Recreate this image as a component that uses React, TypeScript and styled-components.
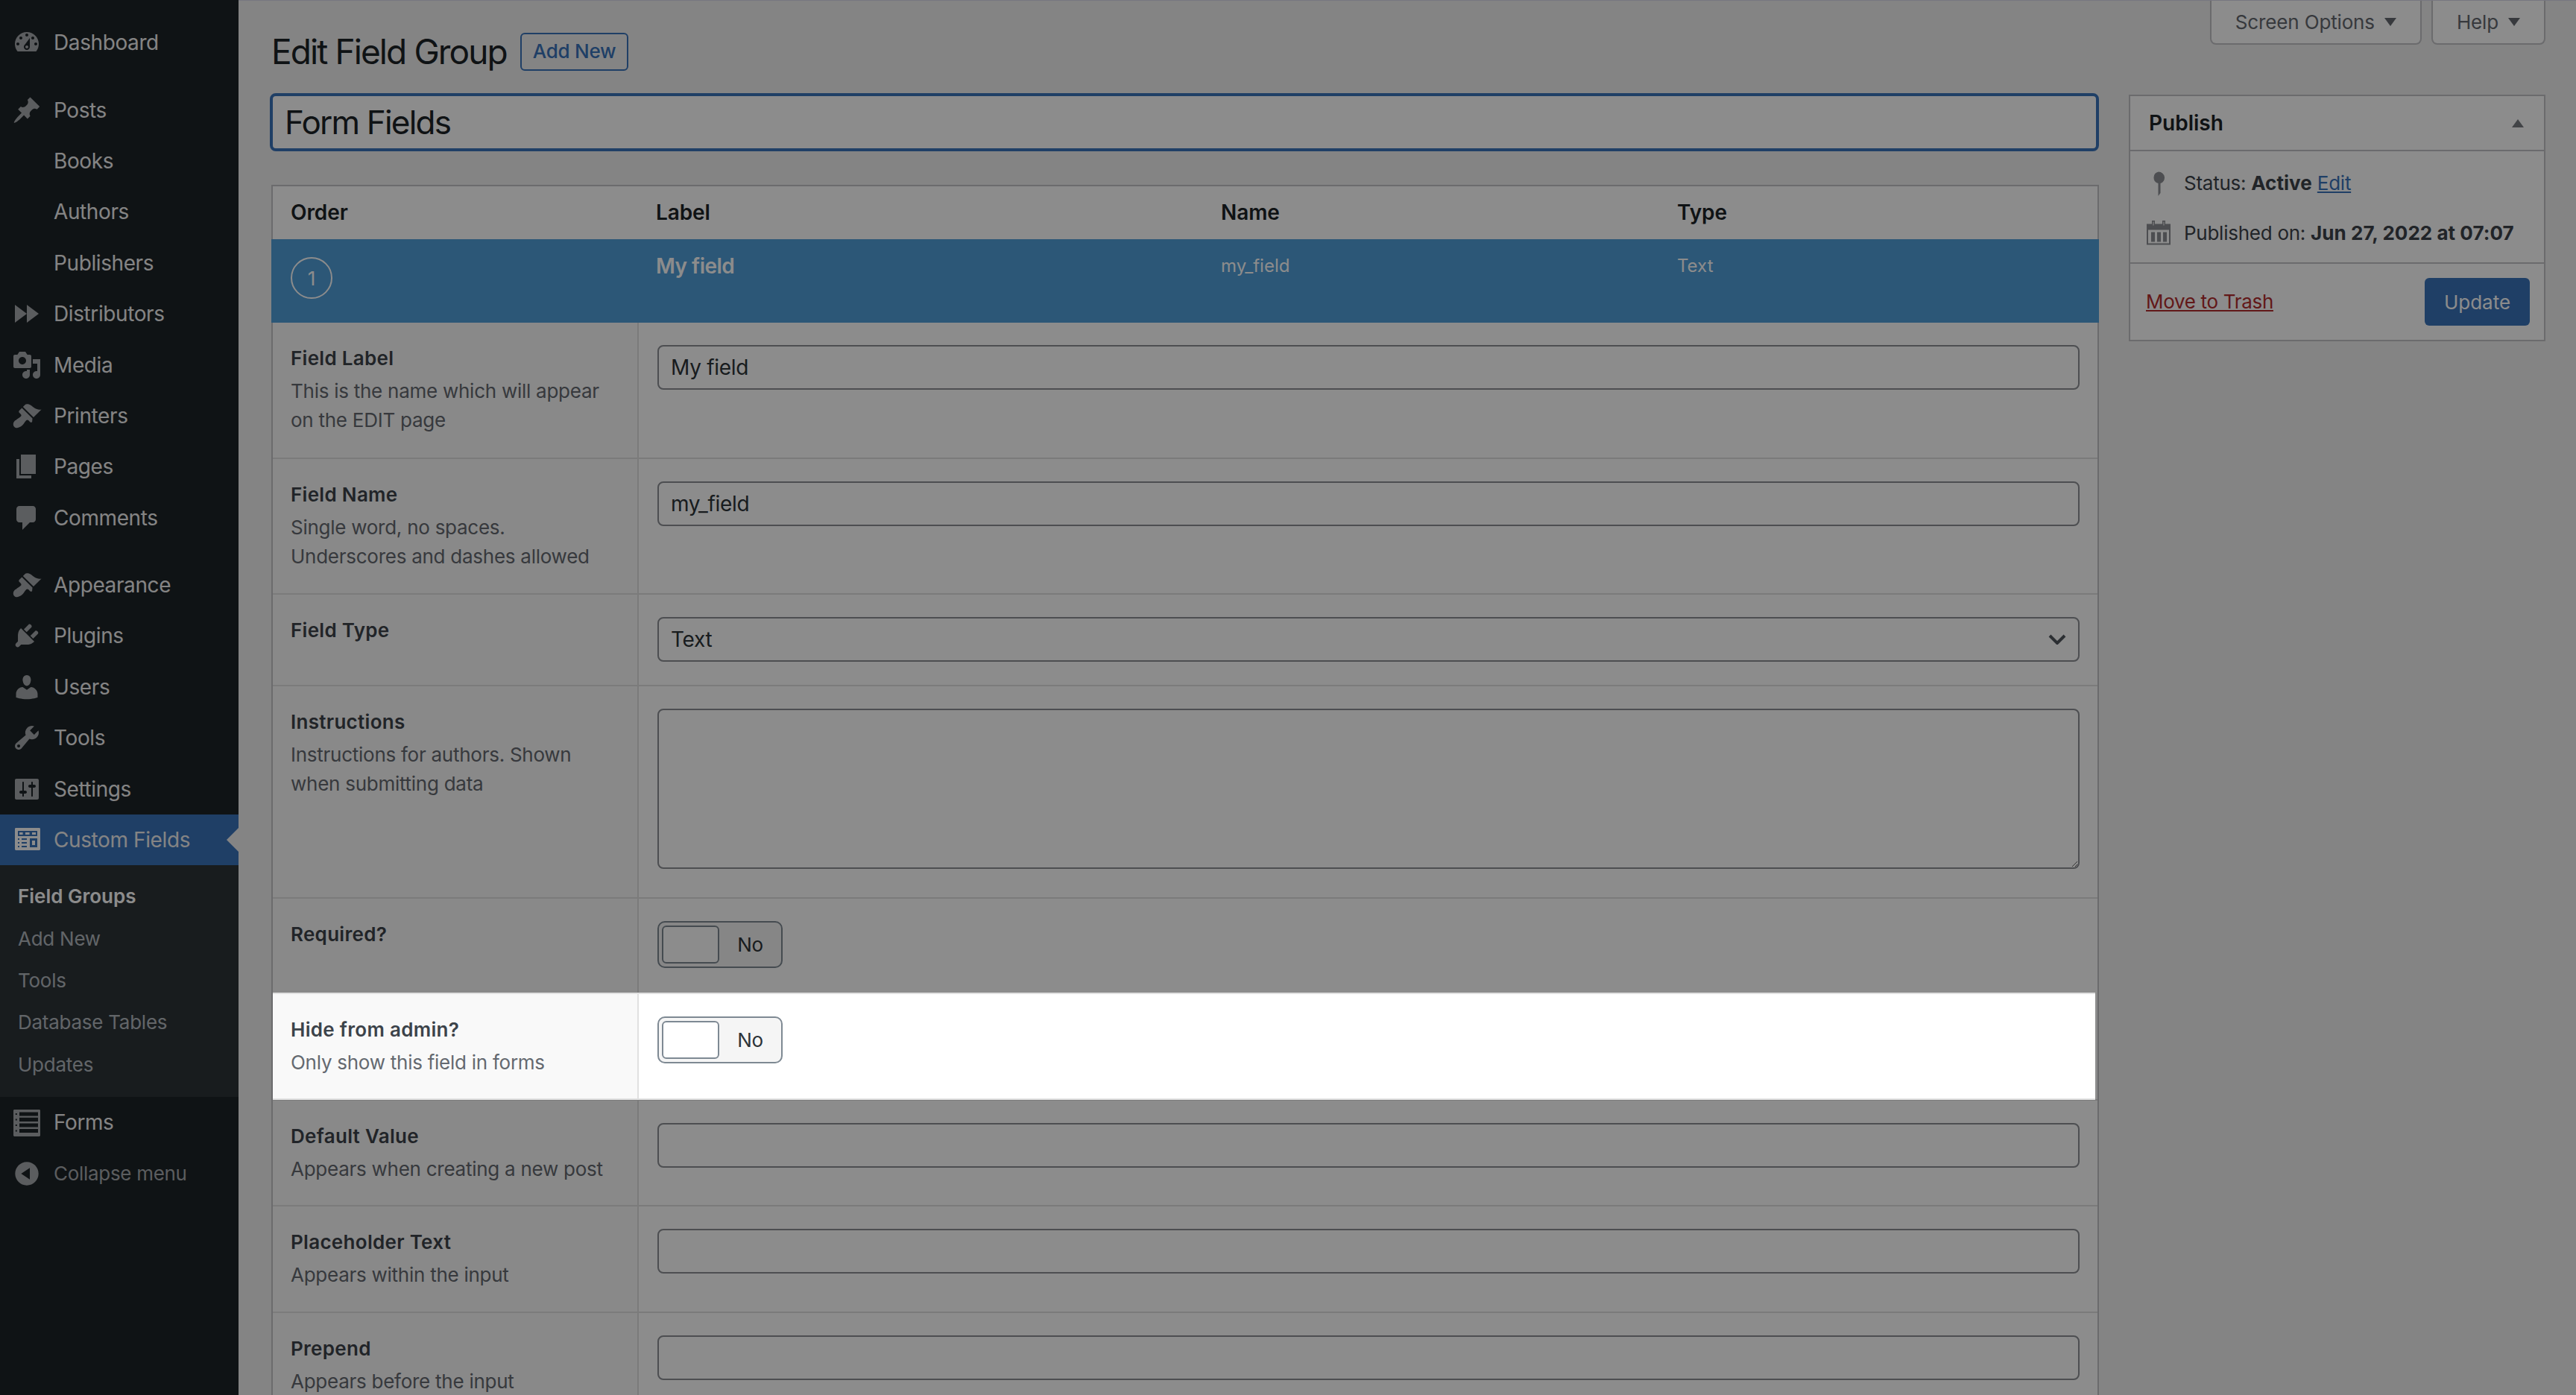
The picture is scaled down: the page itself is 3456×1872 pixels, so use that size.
import React from 'react';
import styled, { createGlobalStyle } from 'styled-components';

const GlobalStyle = createGlobalStyle`
    html, body {
        margin: 0;
        height: 100%;
        overflow: hidden;
        background: #f0f0f1;
    }
    * {
        box-sizing: border-box;
    }
    body {
        font-family: Inter, "Liberation Sans", sans-serif;
        font-size: 26px;
        line-height: 39px;
        letter-spacing: -0.26px;
        color: #3c434a;
    }
`;

const accent = '#3a73ba';

const Shell = styled.div`
    display: flex;
    height: 1872px;
    overflow: hidden;
`;

const Dimmer = styled.div`
    position: fixed;
    inset: 0;
    z-index: 10;
    background: rgba(0, 0, 0, 0.45);
`;

/* sidebar */
const Sidebar = styled.nav`
    flex: 0 0 320px;
    background: #1d2327;
    padding-top: 23px;
`;

const MenuItem = styled.a<{ $gap?: boolean; $indent?: boolean; $active?: boolean }>`
    position: relative;
    display: flex;
    align-items: center;
    gap: 16px;
    height: 68.4px;
    margin-top: ${(p) => (p.$gap ? '22px' : '0')};
    padding-left: ${(p) => (p.$indent ? '72px' : '16px')};
    font-size: 28px;
    line-height: 36px;
    letter-spacing: -0.4px;
    color: #f0f0f1;
    background: ${(p) => (p.$active ? accent : 'transparent')};
    svg {
        fill: ${(p) => (p.$active ? '#fff' : '#a7aaad')};
    }
`;

const ActiveArrow = styled.span`
    position: absolute;
    right: 0;
    top: 18px;
    border: 16px solid transparent;
    border-left: 0;
    border-right-color: #f0f0f1;
`;

const MenuIcon = styled.svg`
    flex: 0 0 40px;
    width: 40px;
    height: 40px;
`;

const SubMenu = styled.div`
    background: #2c3338;
    padding: 14px 0 15px;
`;

const SubItem = styled.a<{ $current?: boolean }>`
    display: block;
    padding: 10px 24px;
    font-size: 26px;
    line-height: 36.4px;
    font-weight: ${(p) => (p.$current ? 600 : 400)};
    letter-spacing: ${(p) => (p.$current ? '0' : '-0.26px')};
    color: ${(p) => (p.$current ? '#fff' : 'rgba(240, 246, 252, 0.7)')};
`;

const CollapseItem = styled(MenuItem)`
    font-size: 26px;
    letter-spacing: -0.3px;
    color: #a7aaad;
`;

/* main area */
const Main = styled.main`
    flex: 1;
    min-width: 0;
    border-top: 1px solid #d8d8ea;
    padding: 0 41px 0 42px;
`;

const Header = styled.header`
    display: flex;
    justify-content: space-between;
    align-items: flex-start;
    height: 124px;
`;

const TitleGroup = styled.div`
    display: flex;
    align-items: center;
    gap: 18px;
    margin: 42px 0 0 2px;
`;

const PageTitle = styled.h1`
    margin: 0;
    font-size: 46px;
    line-height: 52px;
    font-weight: 400;
    letter-spacing: -1.9px;
    color: #1d2327;
`;

const AddNew = styled.a`
    height: 51px;
    padding: 0 15px;
    border: 2px solid ${accent};
    border-radius: 6px;
    font-size: 26px;
    line-height: 46px;
    font-weight: 500;
    color: ${accent};
`;

const Tabs = styled.div`
    display: flex;
    gap: 13px;
`;

const Tab = styled.button`
    display: flex;
    align-items: center;
    gap: 13px;
    height: 59px;
    padding: 0 32px;
    background: #fff;
    border: 2px solid #c3c4c7;
    border-top: 0;
    border-radius: 0 0 8px 8px;
    font: inherit;
    letter-spacing: -0.15px;
    color: #646970;
`;

const Caret = styled.span`
    border: 8px solid transparent;
    border-bottom: 0;
    border-top: 11px solid #646970;
`;

const Columns = styled.div`
    display: grid;
    grid-template-columns: 1fr 559px;
    gap: 40px;
    align-items: start;
`;

const TitleInput = styled.input`
    display: block;
    width: 100%;
    height: 78px;
    margin-bottom: 45px;
    padding: 0 16px;
    border: 4px solid ${accent};
    border-radius: 8px;
    background: #fff;
    outline: 0;
    font-family: inherit;
    font-size: 44px;
    letter-spacing: -1.8px;
    color: #1d2327;
`;

const Table = styled.section`
    margin-left: 2px;
    background: #fff;
    border: solid #c3c4c7;
    border-width: 2px 2px 0;
`;

const HeadRow = styled.div`
    display: grid;
    grid-template-columns: 490px 758px 612px 1fr;
    height: 71px;
    align-items: center;
    font-size: 28px;
    font-weight: 600;
    letter-spacing: -0.1px;
    color: #1d2327;
`;

const HeadCell = styled.span`
    padding-left: 24px;
`;

const ActiveRow = styled.div`
    display: grid;
    grid-template-columns: 490px 758px 612px 1fr;
    height: 112px;
    margin: 0 -2px;
    padding: 0 2px;
    background: #509ed9;
    color: #fff;
`;

const ActiveCell = styled.div<{ $strong?: boolean }>`
    padding: 17px 0 0 24px;
    font-size: ${(p) => (p.$strong ? '28px' : '24px')};
    line-height: 38px;
    font-weight: ${(p) => (p.$strong ? 600 : 400)};
    letter-spacing: ${(p) => (p.$strong ? '-0.5px' : '0')};
`;

const OrderCell = styled.div`
    padding: 24px 0 0 24px;
`;

const OrderBadge = styled.span`
    display: flex;
    align-items: center;
    justify-content: center;
    width: 56px;
    height: 56px;
    border: 2px solid #fff;
    border-radius: 50%;
    font-size: 26px;
`;

const LabelCol = styled.div`
    padding: 28px 24px 29.5px;
    background: #f9f9f9;
    border-right: 2px solid #e1e1e1;
`;

const FieldRow = styled.div<{ $lit?: boolean }>`
    position: ${(p) => (p.$lit ? 'relative' : 'static')};
    z-index: ${(p) => (p.$lit ? 11 : 'auto')};
    display: grid;
    grid-template-columns: 491px 1fr;
    margin-right: ${(p) => (p.$lit ? '3px' : '0')};
    margin-bottom: ${(p) => (p.$lit ? '-1.5px' : '0')};
    background: #fff;
    border-top: 2px solid #e1e1e1;
    border-bottom: ${(p) => (p.$lit ? '2px solid #e1e1e1' : '0')};
    &:nth-child(3) {
        border-top: 0;
    }
    &:nth-child(3) ${LabelCol} {
        padding-bottom: 31px;
    }
`;

const FieldName = styled.div`
    font-weight: 600;
    letter-spacing: 0.3px;
    color: #3c434a;
`;

const FieldHint = styled.div`
    margin-top: 5px;
    color: #646970;
`;

const InputCol = styled.div<{ $lit?: boolean }>`
    padding: 30px ${(p) => (p.$lit ? '21px' : '24px')} 31px 25px;
`;

const TextBox = styled.input`
    display: block;
    width: 100%;
    height: 60px;
    padding: 0 16px;
    border: 2px solid #8c8f94;
    border-radius: 8px;
    background: #fff;
    font-family: inherit;
    font-size: 28px;
    letter-spacing: -0.3px;
    color: #2c3338;
`;

const SelectBox = styled.select`
    display: block;
    width: 100%;
    height: 60px;
    padding: 0 16px;
    border: 2px solid #8c8f94;
    border-radius: 8px;
    appearance: none;
    background: #fff url("data:image/svg+xml,%3Csvg xmlns='http://www.w3.org/2000/svg' width='24' height='14' viewBox='0 0 24 14'%3E%3Cpath d='M2 2l10 10L22 2' fill='none' stroke='%2350575e' stroke-width='4'/%3E%3C/svg%3E") no-repeat right 16px center;
    font-family: inherit;
    font-size: 28px;
    letter-spacing: -0.3px;
    color: #2c3338;
`;

const AreaBox = styled.textarea`
    display: block;
    width: 100%;
    height: 215px;
    margin-bottom: 7px;
    border: 2px solid #8c8f94;
    border-radius: 8px;
    background: #fff;
`;

const Toggle = styled.div`
    display: flex;
    align-items: center;
    width: 168px;
    height: 63px;
    margin-bottom: 2px;
    padding-left: 4px;
    border: 2px solid #7e8993;
    border-radius: 10px;
    background: #f5f5f5;
`;

const ToggleKnob = styled.span`
    flex: 0 0 77px;
    height: 51px;
    border: 2px solid #7e8993;
    border-radius: 6px;
    background: #fff;
`;

const ToggleText = styled.span`
    flex: 1;
    text-align: center;
    color: #2c3338;
`;

/* publish box */
const Publish = styled.aside`
    margin-top: 2px;
    background: #fff;
    border: 2px solid #c3c4c7;
`;

const PublishHead = styled.div`
    display: flex;
    align-items: center;
    justify-content: space-between;
    height: 74px;
    padding: 0 27px 0 25px;
    border-bottom: 2px solid #c3c4c7;
    font-size: 28px;
    font-weight: 600;
    letter-spacing: 0;
    color: #1d2327;
`;

const CollapseCaret = styled.span`
    border: 8px solid transparent;
    border-top: 0;
    border-bottom: 11px solid #787c82;
`;

const PublishBody = styled.div`
    display: flex;
    flex-direction: column;
    gap: 28px;
    padding: 23px 0 20px 22px;
`;

const MetaLine = styled.div`
    display: flex;
    align-items: center;
    gap: 18px;
    svg {
        flex: 0 0 32px;
        fill: #8c8f94;
    }
`;

const Strong = styled.b`
    font-weight: 700;
    letter-spacing: 0.04px;
`;

const BlueLink = styled.a`
    color: ${accent};
    text-decoration: underline;
`;

const PublishFoot = styled.div`
    display: flex;
    align-items: center;
    justify-content: space-between;
    padding: 19px 19px 19px 21px;
    border-top: 2px solid #c3c4c7;
`;

const TrashLink = styled.a`
    margin-bottom: 2px;
    letter-spacing: -0.32px;
    color: #b32d2e;
    text-decoration: underline;
`;

const UpdateButton = styled.button`
    width: 141px;
    height: 64px;
    border: 0;
    border-radius: 6px;
    background: ${accent};
    font: inherit;
    color: #fff;
`;

const dashicons: Record<string, string> = {
    dashboard:
        'M3.76 16h12.48c1.1-1.37 1.76-3.11 1.76-5 0-4.42-3.58-8-8-8s-8 3.58-8 8c0 1.89.66 3.63 1.76 5zM10 4c.55 0 1 .45 1 1s-.45 1-1 1-1-.45-1-1 .45-1 1-1zM6 6c.55 0 1 .45 1 1s-.45 1-1 1-1-.45-1-1 .45-1 1-1zm8 0c.55 0 1 .45 1 1s-.45 1-1 1-1-.45-1-1 .45-1 1-1zm-5.37 5.55L12 7v6c0 1.1-.9 2-2 2s-2-.9-2-2c0-.57.24-1.08.63-1.45zM4 10c.55 0 1 .45 1 1s-.45 1-1 1-1-.45-1-1 .45-1 1-1zm12 0c.55 0 1 .45 1 1s-.45 1-1 1-1-.45-1-1 .45-1 1-1zm-5 3c0-.55-.45-1-1-1s-1 .45-1 1 .45 1 1 1 1-.45 1-1z',
    post: 'M10.44 3.02l1.82-1.82 6.36 6.35-1.83 1.82c-1.05-.68-2.48-.57-3.41.36l-.75.75c-.92.93-1.04 2.35-.35 3.41l-1.83 1.82-2.41-2.41-2.8 2.79c-.42.42-3.38 2.71-3.8 2.29s1.86-3.39 2.28-3.81l2.79-2.79L4.1 9.36l1.83-1.82c1.05.69 2.48.57 3.4-.36l.75-.75c.93-.92 1.05-2.35.36-3.41z',
    forward: 'M2 4l8 6V4l8 6-8 6v-6l-8 6z',
    media: 'M13 11V4c0-.55-.45-1-1-1h-1.67L9 1H5L3.67 3H2c-.55 0-1 .45-1 1v7c0 .55.45 1 1 1h10c.55 0 1-.45 1-1zM7 4.5c1.38 0 2.5 1.12 2.5 2.5S8.38 9.5 7 9.5 4.5 8.38 4.5 7 5.62 4.5 7 4.5zM14 6h5v10.5c0 1.38-1.12 2.5-2.5 2.5S14 17.88 14 16.5s1.12-2.5 2.5-2.5c.17 0 .34.02.5.05V9h-3V6zm-4 8.05V13h2v3.5c0 1.38-1.12 2.5-2.5 2.5S7 17.88 7 16.5 8.12 14 9.5 14c.17 0 .34.02.5.05z',
    brush: 'M14.48 11.06L7.41 3.99l1.5-1.5c.5-.56 2.3-.47 3.51.32 1.21.8 1.43 1.28 2.91 2.1 1.18.64 2.45 1.26 4.45.85zm-.71.71L6.7 4.7 4.93 6.47c-.39.39-.39 1.02 0 1.41l1.06 1.06c.39.39.39 1.03 0 1.42-.6.6-1.43 1.11-2.21 1.69-.35.26-.7.53-1.01.84C1.43 13.23.91 14.9.91 15.79c0 .39.14 1.03.53 1.42l.39.39c.38.39.9.53 1.39.53.89 0 2.56-.52 3.9-1.85.31-.31.58-.66.84-1.01.58-.78 1.09-1.61 1.69-2.21.39-.39 1.03-.39 1.42 0l1.06 1.06c.39.39 1.02.39 1.41 0z',
    page: 'M6 15V2h10v13H6zm-1 1h8v2H3V5h2v11z',
    comments:
        'M5 2h9c1.1 0 2 .9 2 2v7c0 1.1-.9 2-2 2h-2l-5 5v-5H5c-1.1 0-2-.9-2-2V4c0-1.1.9-2 2-2z',
    plugins:
        'M13.11 4.36L9.87 7.6 8 5.73l3.24-3.24c.35-.34 1.05-.2 1.56.32.52.51.66 1.21.31 1.55zm-8 1.77l.91-1.12 9.01 9.01-1.19.84c-.71.71-2.63 1.16-3.82 1.16H6.14L4.9 17.26c-.59.59-1.54.59-2.12 0-.59-.58-.59-1.53 0-2.12l1.24-1.24v-3.88c0-1.13.4-3.19 1.09-3.89zm7.26 3.97l3.24-3.24c.34-.35 1.04-.21 1.55.31.52.51.66 1.21.31 1.55l-3.24 3.25z',
    users: 'M10 9.25c-2.27 0-2.73-3.44-2.73-3.44C7 4.02 7.82 2 9.97 2c2.16 0 2.98 2.02 2.71 3.81 0 0-.41 3.44-2.68 3.44zm0 2.57L12.72 10c2.39 0 4.52 2.33 4.52 4.53v2.49s-3.65 1.13-7.24 1.13c-3.65 0-7.24-1.13-7.24-1.13v-2.49c0-2.25 1.94-4.48 4.47-4.48z',
    tools: 'M16.68 9.77c-1.34 1.34-3.3 1.67-4.95.99l-5.41 6.52c-.99.99-2.59.99-3.58 0s-.99-2.59 0-3.57l6.52-5.42c-.68-1.65-.35-3.61.99-4.95 1.28-1.28 3.12-1.62 4.72-1.06l-2.89 2.89 2.82 2.82 2.86-2.87c.53 1.58.18 3.39-1.08 4.65zM3.81 16.21c.4.39 1.04.39 1.43 0 .4-.4.4-1.04 0-1.43-.39-.4-1.03-.4-1.43 0-.39.39-.39 1.03 0 1.43z',
    settings:
        'M18 16V4c0-.55-.45-1-1-1H3c-.55 0-1 .45-1 1v12c0 .55.45 1 1 1h14c.55 0 1-.45 1-1zM8 11h1c.55 0 1 .45 1 1s-.45 1-1 1H8v1.5c0 .28-.22.5-.5.5s-.5-.22-.5-.5V13H6c-.55 0-1-.45-1-1s.45-1 1-1h1V5.5c0-.28.22-.5.5-.5s.5.22.5.5V11zm5-2h-1c-.55 0-1-.45-1-1s.45-1 1-1h1V5.5c0-.28.22-.5.5-.5s.5.22.5.5V7h1c.55 0 1 .45 1 1s-.45 1-1 1h-1v5.5c0 .28-.22.5-.5.5s-.5-.22-.5-.5V9z',
    collapse:
        'M10 2.16c4.33 0 7.84 3.51 7.84 7.84s-3.51 7.84-7.84 7.84S2.16 14.33 2.16 10 5.71 2.16 10 2.16zm2 11.72V6.12L6.18 9.97z',
    fieldsTable:
        'M2.700 2h15.600c.4 0 .7.3.7.7v13.600c0 .4-.3.7-.7.7H2.700c-.4 0-.7-.3-.7-.7V2.700c0-.4.3-.7.7-.7zM4 4v3.500h13V4H4zm1 1h2.300v1.500H5V5zm4 0h2.800v1.500H9V5zm4.500 0H16v1.500h-2.500V5zM4 9v1h1V9H4zm2.500 0v1H10V9H6.500zM12 9v6h5V9h-5zm1.500 1.500h2v3h-2v-3zM4 11.500v1h1v-1H4zm2.500 0v1H10v-1H6.500zM4 14v1h1v-1H4zm2.500 0v1H10v-1H6.500z',
    forms: 'M1.700 1.500h16.600c.4 0 .7.3.7.700v16.600c0 .4-.3.7-.7.7H1.700c-.4 0-.7-.3-.7-.7V2.200c0-.4.3-.7.7-.7zM5 3.300v2.400h12.500V3.300H5zm0 3.600v2.600h12.500V6.900H5zm0 3.800v2.600h12.500v-2.600H5zm0 3.800V17h12.500v-2.500H5zM2.400 4v1h1V4h-1zm0 3.700v1h1v-1h-1zm0 3.800v1h1v-1h-1zm0 3.700v1h1v-1h-1z',
};

const Icon = ({ name }: { name: string }) => (
    <MenuIcon viewBox="0 0 20 20">
        <path fillRule="evenodd" d={dashicons[name]} />
    </MenuIcon>
);

const topMenu = [
    { label: 'Dashboard', icon: 'dashboard' },
    { label: 'Posts', icon: 'post', gap: true },
    { label: 'Books' },
    { label: 'Authors' },
    { label: 'Publishers' },
    { label: 'Distributors', icon: 'forward' },
    { label: 'Media', icon: 'media' },
    { label: 'Printers', icon: 'brush' },
    { label: 'Pages', icon: 'page' },
    { label: 'Comments', icon: 'comments' },
    { label: 'Appearance', icon: 'brush', gap: true },
    { label: 'Plugins', icon: 'plugins' },
    { label: 'Users', icon: 'users' },
    { label: 'Tools', icon: 'tools' },
    { label: 'Settings', icon: 'settings' },
];

const subMenu = ['Field Groups', 'Add New', 'Tools', 'Database Tables', 'Updates'];

interface Field {
    name: string;
    hint?: string[];
    kind: 'text' | 'select' | 'area' | 'toggle';
    value?: string;
    lit?: boolean;
}

const fields: Field[] = [
    {
        name: 'Field Label',
        hint: ['This is the name which will appear', 'on the EDIT page'],
        kind: 'text',
        value: 'My field',
    },
    {
        name: 'Field Name',
        hint: ['Single word, no spaces.', 'Underscores and dashes allowed'],
        kind: 'text',
        value: 'my_field',
    },
    { name: 'Field Type', kind: 'select' },
    {
        name: 'Instructions',
        hint: ['Instructions for authors. Shown', 'when submitting data'],
        kind: 'area',
    },
    { name: 'Required?', kind: 'toggle' },
    {
        name: 'Hide from admin?',
        hint: ['Only show this field in forms'],
        kind: 'toggle',
        lit: true,
    },
    { name: 'Default Value', hint: ['Appears when creating a new post'], kind: 'text' },
    { name: 'Placeholder Text', hint: ['Appears within the input'], kind: 'text' },
    { name: 'Prepend', hint: ['Appears before the input'], kind: 'text' },
];

const FieldControl = ({ field }: { field: Field }) => {
    if (field.kind === 'select') {
        return (
            <SelectBox defaultValue="Text">
                <option>Text</option>
            </SelectBox>
        );
    }
    if (field.kind === 'area') return <AreaBox readOnly />;
    if (field.kind === 'toggle') {
        return (
            <Toggle>
                <ToggleKnob />
                <ToggleText>No</ToggleText>
            </Toggle>
        );
    }
    return <TextBox readOnly defaultValue={field.value} />;
};

const App = () => {
    return (
        <Shell>
            <GlobalStyle />
            <Sidebar>
                {topMenu.map((item) => (
                    <MenuItem key={item.label} $gap={item.gap} $indent={!item.icon}>
                        {item.icon && <Icon name={item.icon} />}
                        {item.label}
                    </MenuItem>
                ))}
                <MenuItem $active>
                    <Icon name="fieldsTable" />
                    Custom Fields
                    <ActiveArrow />
                </MenuItem>
                <SubMenu>
                    {subMenu.map((label, i) => (
                        <SubItem key={label} $current={i === 0}>
                            {label}
                        </SubItem>
                    ))}
                </SubMenu>
                <MenuItem>
                    <Icon name="forms" />
                    Forms
                </MenuItem>
                <CollapseItem>
                    <Icon name="collapse" />
                    Collapse menu
                </CollapseItem>
            </Sidebar>
            <Main>
                <Header>
                    <TitleGroup>
                        <PageTitle>Edit Field Group</PageTitle>
                        <AddNew>Add New</AddNew>
                    </TitleGroup>
                    <Tabs>
                        <Tab>
                            Screen Options
                            <Caret />
                        </Tab>
                        <Tab>
                            Help
                            <Caret />
                        </Tab>
                    </Tabs>
                </Header>
                <Columns>
                    <div>
                        <TitleInput readOnly defaultValue="Form Fields" />
                        <Table>
                            <HeadRow>
                                <HeadCell>Order</HeadCell>
                                <HeadCell>Label</HeadCell>
                                <HeadCell>Name</HeadCell>
                                <HeadCell>Type</HeadCell>
                            </HeadRow>
                            <ActiveRow>
                                <OrderCell>
                                    <OrderBadge>1</OrderBadge>
                                </OrderCell>
                                <ActiveCell $strong>My field</ActiveCell>
                                <ActiveCell>my_field</ActiveCell>
                                <ActiveCell>Text</ActiveCell>
                            </ActiveRow>
                            {fields.map((field) => (
                                <FieldRow key={field.name} $lit={field.lit}>
                                    <LabelCol>
                                        <FieldName>{field.name}</FieldName>
                                        {field.hint && (
                                            <FieldHint>
                                                {field.hint.map((line) => (
                                                    <div key={line}>{line}</div>
                                                ))}
                                            </FieldHint>
                                        )}
                                    </LabelCol>
                                    <InputCol $lit={field.lit}>
                                        <FieldControl field={field} />
                                    </InputCol>
                                </FieldRow>
                            ))}
                        </Table>
                    </div>
                    <Publish>
                        <PublishHead>
                            Publish
                            <CollapseCaret />
                        </PublishHead>
                        <PublishBody>
                            <MetaLine>
                                <svg width="32" height="39" viewBox="0 0 32 39">
                                    <path d="M16 4.500a8 8 0 0 1 2.500 15.600V33l-3 4v-16.900A8 8 0 0 1 16 4.500z" />
                                </svg>
                                <span>
                                    Status: <Strong>Active</Strong> <BlueLink>Edit</BlueLink>
                                </span>
                            </MetaLine>
                            <MetaLine>
                                <svg width="32" height="39" viewBox="0 0 32 39">
                                    <path
                                        fillRule="evenodd"
                                        d="M0 7.500h7V3h4v4.500h10V3h4v4.500h7v28H0zM8.500 4.500v5h1v-5zM22.500 4.500v5h1v-5zM2 15.500v18h28v-18zM6 18.500h5v13H6zM14 18.500h5v13h-5zM22 18.500h5v13h-5z"
                                    />
                                </svg>
                                <span>
                                    Published on: <Strong>Jun 27, 2022 at 07:07</Strong>
                                </span>
                            </MetaLine>
                        </PublishBody>
                        <PublishFoot>
                            <TrashLink>Move to Trash</TrashLink>
                            <UpdateButton>Update</UpdateButton>
                        </PublishFoot>
                    </Publish>
                </Columns>
            </Main>
            <Dimmer />
        </Shell>
    );
};

export default App;
